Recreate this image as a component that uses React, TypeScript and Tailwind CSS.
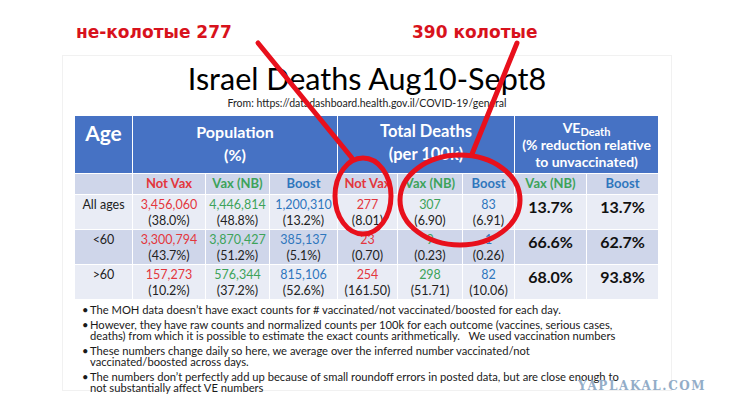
const RED = 'text-[#e3363d]';
const GREEN = 'text-[#3da35a]';
const BLUE = 'text-[#2f76bd]';

type Cell = { top: string; bottom: string; color: string };

const rows: { age: string; bg: string; h: string; cells: Cell[]; ve: [string, string] }[] = [
  {
    age: 'All ages',
    bg: 'bg-[#e9ecf5]',
    h: 'h-[35px]',
    cells: [
      { top: '3,456,060', bottom: '(38.0%)', color: RED },
      { top: '4,446,814', bottom: '(48.8%)', color: GREEN },
      { top: '1,200,310', bottom: '(13.2%)', color: BLUE },
      { top: '277', bottom: '(8.01)', color: RED },
      { top: '307', bottom: '(6.90)', color: GREEN },
      { top: '83', bottom: '(6.91)', color: BLUE },
    ],
    ve: ['13.7%', '13.7%'],
  },
  {
    age: '<60',
    bg: 'bg-[#cfd6ea]',
    h: 'h-[35px]',
    cells: [
      { top: '3,300,794', bottom: '(43.7%)', color: RED },
      { top: '3,870,427', bottom: '(51.2%)', color: GREEN },
      { top: '385,137', bottom: '(5.1%)', color: BLUE },
      { top: '23', bottom: '(0.70)', color: RED },
      { top: '9', bottom: '(0.23)', color: GREEN },
      { top: '1', bottom: '(0.26)', color: BLUE },
    ],
    ve: ['66.6%', '62.7%'],
  },
  {
    age: '>60',
    bg: 'bg-[#e9ecf5]',
    h: 'h-[34px]',
    cells: [
      { top: '157,273', bottom: '(10.2%)', color: RED },
      { top: '576,344', bottom: '(37.2%)', color: GREEN },
      { top: '815,106', bottom: '(52.6%)', color: BLUE },
      { top: '254', bottom: '(161.50)', color: RED },
      { top: '298', bottom: '(51.71)', color: GREEN },
      { top: '82', bottom: '(10.06)', color: BLUE },
    ],
    ve: ['68.0%', '93.8%'],
  },
];

const subHeads: { label: string; color: string }[] = [
  { label: 'Not Vax', color: RED },
  { label: 'Vax (NB)', color: GREEN },
  { label: 'Boost', color: BLUE },
  { label: 'Not Vax', color: RED },
  { label: 'Vax (NB)', color: GREEN },
  { label: 'Boost', color: BLUE },
  { label: 'Vax (NB)', color: GREEN },
  { label: 'Boost', color: BLUE },
];

const notes: React.ReactNode[] = [
  <>The MOH data doesn’t have exact counts for # vaccinated/not vaccinated/boosted for each day.</>,
  <>
    However, they have raw counts and normalized counts per 100k for each outcome (vaccines, serious cases,
    <br />
    deaths) from which it is possible to estimate the exact counts arithmetically.&nbsp;&nbsp; We used vaccination
    numbers
  </>,
  <>
    These numbers change daily so here, we average over the inferred number vaccinated/not
    <br />
    vaccinated/boosted across days.
  </>,
  <>
    The numbers don’t perfectly add up because of small roundoff errors in posted data, but are close enough to
    <br />
    not substantially affect VE numbers
  </>,
];

function DeathsTable(): React.ReactElement {
  return (
    <table className="w-[584px] table-fixed border-collapse text-center">
      <colgroup>
        <col className="w-[58px]" />
        <col className="w-[73px]" />
        <col className="w-[64px]" />
        <col className="w-[68px]" />
        <col className="w-[60px]" />
        <col className="w-[65px]" />
        <col className="w-[52px]" />
        <col className="w-[72px]" />
        <col className="w-[72px]" />
      </colgroup>
      <thead>
        <tr className="h-[58px] bg-[#4672c4] font-bold text-white">
          <th className="border border-white pt-[5px] align-top text-[21px] leading-[24px]">
            Age
          </th>
          <th
            colSpan={3}
            className="border border-white pt-[4px] align-top text-[16px] leading-[23px]"
          >
            Population
            <br />
            (%)
          </th>
          <th
            colSpan={3}
            className="border border-white pt-[4px] align-top text-[16.5px] leading-[23px]"
          >
            Total Deaths
            <br />
            (per 100k)
          </th>
          <th
            colSpan={2}
            className="border border-white pt-[3px] align-top text-[14px] leading-[17px]"
          >
            VE<sub className="text-[11px]">Death</sub>
            <br />
            (% reduction relative
            <br />
            to unvaccinated)
          </th>
        </tr>
        <tr className="h-[20px] bg-[#cfd6ea] text-[13px] font-bold">
          <th className="border border-white" />
          {subHeads.map((s, i) => (
            <th key={i} className={`border border-white ${s.color}`}>
              {s.label}
            </th>
          ))}
        </tr>
      </thead>
      <tbody>
        {rows.map((r) => (
          <tr key={r.age} className={`${r.h} ${r.bg}`}>
            <td className="border border-white pt-[2px] align-top text-[12.5px] leading-[16px] text-[#222]">
              {r.age}
            </td>
            {r.cells.map((c, i) => (
              <td
                key={i}
                className="border border-white pt-[2px] align-top text-[12.5px] leading-[16px] text-[#222]"
              >
                <span className={c.color}>{c.top}</span>
                <br />
                {c.bottom}
              </td>
            ))}
            {r.ve.map((v, i) => (
              <td
                key={i}
                className="border border-white pt-[2px] align-top text-[16px] font-bold leading-[20px] text-[#111]"
              >
                {v}
              </td>
            ))}
          </tr>
        ))}
      </tbody>
    </table>
  );
}

function Annotations(): React.ReactElement {
  return (
    <svg
      className="pointer-events-none absolute left-0 top-0"
      width={740}
      height={414}
      viewBox="0 0 740 414"
    >
      <g fill="none" stroke="#e8101c" strokeWidth={5} strokeLinecap="round">
        <line x1={258} y1={43} x2={352} y2={158} />
        <ellipse cx={363} cy={196} rx={28} ry={38} />
        <line x1={517} y1={43} x2={472} y2={154} />
        <ellipse cx={460} cy={200} rx={60} ry={45} />
      </g>
    </svg>
  );
}

export default function App(): React.ReactElement {
  return (
    <div className="relative h-[414px] w-[740px] overflow-hidden bg-white font-['Lato','Liberation_Sans',sans-serif]">
      <div className="flex h-[55px] items-start pl-[76px] pt-[21px] font-['DejaVu_Sans',sans-serif] text-[17px] font-bold leading-[22px] text-[#d8121c]">
        <span className="w-[336px]">не-колотые 277</span>
        <span>390 колотые</span>
      </div>

      <div className="ml-[62px] h-[336px] w-[610px] border border-[#f1f1f1] px-[11px]">
        <h1 className="pt-[5px] text-center text-[30.5px] font-normal leading-[34px] text-black">
          Israel Deaths Aug10-Sept8
        </h1>
        <p className="text-center text-[10.5px] leading-[16px] text-[#222]">
          From: https://datadashboard.health.gov.il/COVID-19/general
        </p>
        <div className="mt-[4px]">
          <DeathsTable />
        </div>
        <ul className="pl-[8px] text-[11.2px] leading-[11px] text-[#1a1a1a]">
          {notes.map((t, i) => (
            <li key={i} className="mt-[4px] flex whitespace-nowrap">
              <span className="w-[8px] shrink-0">•</span>
              <span>{t}</span>
            </li>
          ))}
        </ul>
      </div>

      <div className="absolute left-[578px] top-[377px] font-['DejaVu_Serif',serif] text-[12px] font-bold tracking-[1.6px] text-[#93adc8]">
        YAPLAKAL.COM
      </div>

      <Annotations />
    </div>
  );
}
